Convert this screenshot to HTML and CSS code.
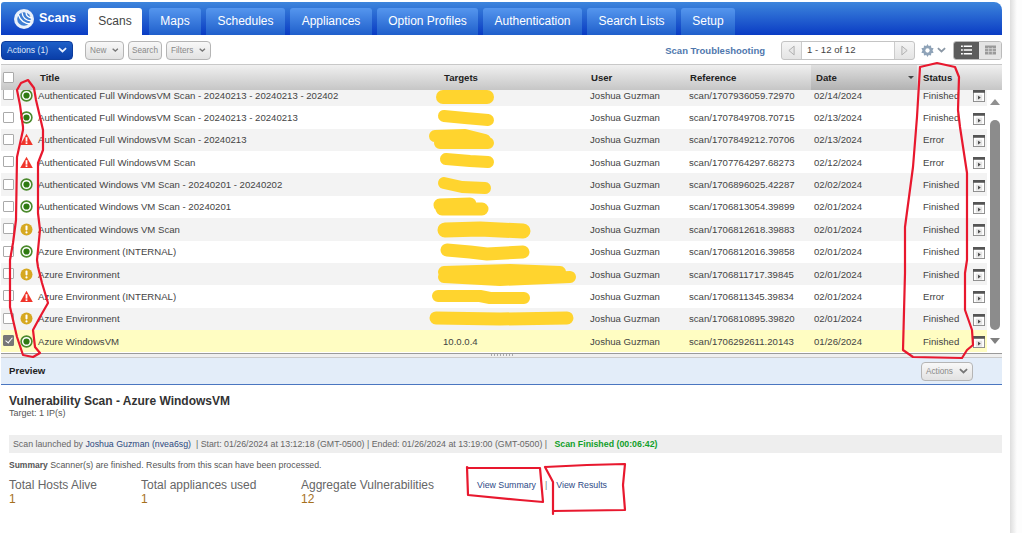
FILE: index.html
```html
<!DOCTYPE html>
<html lang="en">
<head>
    <meta charset="UTF-8">
    <title>Scans</title>
    <link rel="stylesheet" href="styles.css">
</head>
<body>
    <svg class="defs" width="0" height="0">
        <symbol id="ok" viewBox="0 0 13 13">
            <circle cx="6.5" cy="6.5" r="5.4" fill="#fff" stroke="#4b8a2c" stroke-width="1.6"/>
            <circle cx="6.5" cy="6.5" r="3.1" fill="#2f7a12"/>
        </symbol>
        <symbol id="warn" viewBox="0 0 13 13">
            <circle cx="6.5" cy="6.5" r="6" fill="#d6a820"/>
            <rect x="5.5" y="2.6" width="2" height="4.8" rx=".8" fill="#fff"/>
            <circle cx="6.5" cy="9.4" r="1.1" fill="#fff"/>
        </symbol>
        <symbol id="err" viewBox="0 0 13 13">
            <path d="M6.5 .8 12.8 12H.2z" fill="#f0352a"/>
            <rect x="5.6" y="4.2" width="1.8" height="4.4" fill="#fff"/>
            <rect x="5.6" y="9.3" width="1.8" height="1.7" fill="#fff"/>
        </symbol>
        <symbol id="detail" viewBox="0 0 13 13">
            <rect x=".5" y=".5" width="12" height="12" fill="#fff" stroke="#8a8a8a"/>
            <rect x="0" y="0" width="13" height="3" fill="#555"/>
            <rect x="3" y="5" width="7" height="6.5" fill="#e4e4e4"/>
            <path d="M5.5 6.2 8.4 8.2 5.5 10.2z" fill="#444"/>
        </symbol>
        <symbol id="chev" viewBox="0 0 10 6">
            <path d="M1 1 5 4.6 9 1" fill="none" stroke="currentColor" stroke-width="2"/>
        </symbol>
    </svg>

    <div class="app">
        <header class="topbar">
            <div class="brand">
                <svg class="logo" viewBox="0 0 20 20">
                    <circle cx="10" cy="10" r="10" fill="#e9f0fa"/>
                    <circle cx="10" cy="10" r="6.8" fill="#3f7fd4"/>
                    <path d="M4 5C6 11 10 15 17 15M8 3.5C8.5 8 11 11.5 17.5 12M12 3C12 6 13.5 8.5 18 9" fill="none" stroke="#fff" stroke-width="1.3"/>
                </svg>
                <span>Scans</span>
            </div>
            <nav class="tabs">
                <a class="tab active w-scans">Scans</a>
                <a class="tab w-maps">Maps</a>
                <a class="tab w-sched">Schedules</a>
                <a class="tab w-appl">Appliances</a>
                <a class="tab w-opt">Option Profiles</a>
                <a class="tab w-auth">Authentication</a>
                <a class="tab w-search">Search Lists</a>
                <a class="tab w-setup">Setup</a>
            </nav>
        </header>

        <div class="toolbar">
            <button class="btn btn-primary">Actions (1) <svg class="chev"><use href="#chev"/></svg></button>
            <button class="btn btn-new">New <svg class="chev"><use href="#chev"/></svg></button>
            <button class="btn btn-search">Search</button>
            <button class="btn btn-filters">Filters <svg class="chev"><use href="#chev"/></svg></button>
            <a class="trouble">Scan Troubleshooting</a>
            <div class="pager">
                <span class="pager-arrow"><svg viewBox="0 0 8 12"><path d="M7 1 1 6l6 5z" fill="#e6e6e6" stroke="#aaa"/></svg></span>
                <span class="pager-text">1 - 12 of 12</span>
                <span class="pager-arrow"><svg viewBox="0 0 8 12"><path d="M1 1l6 5-6 5z" fill="#e6e6e6" stroke="#aaa"/></svg></span>
            </div>
            <svg class="gear" viewBox="0 0 14 14">
                <path d="M7 0 8.3 2.2 10.8 1.5 11 4 13.6 4.6 12.4 7 13.6 9.4 11 10 10.8 12.5 8.3 11.8 7 14 5.7 11.8 3.2 12.5 3 10 .4 9.4 1.6 7 .4 4.6 3 4 3.2 1.5 5.7 2.2z" fill="#8fa3b8"/>
                <circle cx="7" cy="7" r="2.3" fill="#fff"/>
            </svg>
            <svg class="chev chev-gear"><use href="#chev"/></svg>
            <div class="views">
                <span class="view on">
                    <svg viewBox="0 0 12 10"><path d="M0 1h2M3 1h9M0 5h2M3 5h9M0 9h2M3 9h9" stroke="#fff" stroke-width="1.6"/></svg>
                </span>
                <span class="view">
                    <svg viewBox="0 0 12 10"><path d="M0 0h12v10H0z" fill="#999"/><path d="M0 3.5h12M0 6.5h12M4 2v8M8 2v8" stroke="#ddd" stroke-width=".8"/></svg>
                </span>
            </div>
        </div>

        <div class="grid-head cols">
            <span><i class="box"></i></span>
            <span></span>
            <span>Title</span>
            <span>Targets</span>
            <span>User</span>
            <span>Reference</span>
            <span class="sorted">Date<b></b></span>
            <span>Status</span>
            <span></span>
        </div>

        <div class="grid-body">
            <div class="rows">
                <div class="row cols alt"><span><i class="box"></i></span><svg class="st"><use href="#ok"/></svg><span>Authenticated Full WindowsVM Scan - 20240213 - 20240213 - 202402</span><span></span><span>Joshua Guzman</span><span>scan/1707936059.72970</span><span>02/14/2024</span><span>Finished</span><svg class="dt"><use href="#detail"/></svg></div>
                <div class="row cols"><span><i class="box"></i></span><svg class="st"><use href="#ok"/></svg><span>Authenticated Full WindowsVM Scan - 20240213 - 20240213</span><span></span><span>Joshua Guzman</span><span>scan/1707849708.70715</span><span>02/13/2024</span><span>Finished</span><svg class="dt"><use href="#detail"/></svg></div>
                <div class="row cols alt"><span><i class="box"></i></span><svg class="st"><use href="#err"/></svg><span>Authenticated Full WindowsVM Scan - 20240213</span><span></span><span>Joshua Guzman</span><span>scan/1707849212.70706</span><span>02/13/2024</span><span>Error</span><svg class="dt"><use href="#detail"/></svg></div>
                <div class="row cols"><span><i class="box"></i></span><svg class="st"><use href="#err"/></svg><span>Authenticated Full WindowsVM Scan</span><span></span><span>Joshua Guzman</span><span>scan/1707764297.68273</span><span>02/12/2024</span><span>Error</span><svg class="dt"><use href="#detail"/></svg></div>
                <div class="row cols alt"><span><i class="box"></i></span><svg class="st"><use href="#ok"/></svg><span>Authenticated Windows VM Scan - 20240201 - 20240202</span><span></span><span>Joshua Guzman</span><span>scan/1706896025.42287</span><span>02/02/2024</span><span>Finished</span><svg class="dt"><use href="#detail"/></svg></div>
                <div class="row cols"><span><i class="box"></i></span><svg class="st"><use href="#ok"/></svg><span>Authenticated Windows VM Scan - 20240201</span><span></span><span>Joshua Guzman</span><span>scan/1706813054.39899</span><span>02/01/2024</span><span>Finished</span><svg class="dt"><use href="#detail"/></svg></div>
                <div class="row cols alt"><span><i class="box"></i></span><svg class="st"><use href="#warn"/></svg><span>Authenticated Windows VM Scan</span><span></span><span>Joshua Guzman</span><span>scan/1706812618.39883</span><span>02/01/2024</span><span>Finished</span><svg class="dt"><use href="#detail"/></svg></div>
                <div class="row cols"><span><i class="box"></i></span><svg class="st"><use href="#ok"/></svg><span>Azure Environment (INTERNAL)</span><span></span><span>Joshua Guzman</span><span>scan/1706812016.39858</span><span>02/01/2024</span><span>Finished</span><svg class="dt"><use href="#detail"/></svg></div>
                <div class="row cols alt"><span><i class="box"></i></span><svg class="st"><use href="#warn"/></svg><span>Azure Environment</span><span></span><span>Joshua Guzman</span><span>scan/1706811717.39845</span><span>02/01/2024</span><span>Finished</span><svg class="dt"><use href="#detail"/></svg></div>
                <div class="row cols"><span><i class="box"></i></span><svg class="st"><use href="#err"/></svg><span>Azure Environment (INTERNAL)</span><span></span><span>Joshua Guzman</span><span>scan/1706811345.39834</span><span>02/01/2024</span><span>Error</span><svg class="dt"><use href="#detail"/></svg></div>
                <div class="row cols alt"><span><i class="box"></i></span><svg class="st"><use href="#warn"/></svg><span>Azure Environment</span><span></span><span>Joshua Guzman</span><span>scan/1706810895.39820</span><span>02/01/2024</span><span>Finished</span><svg class="dt"><use href="#detail"/></svg></div>
                <div class="row cols selected"><span><i class="box checked"></i></span><svg class="st"><use href="#ok"/></svg><span>Azure WindowsVM</span><span>10.0.0.4</span><span>Joshua Guzman</span><span>scan/1706292611.20143</span><span>01/26/2024</span><span>Finished</span><svg class="dt"><use href="#detail"/></svg></div>
            </div>
            <div class="scrollbar">
                <i class="arrow-up"></i>
                <i class="thumb"></i>
                <i class="arrow-down"></i>
            </div>
        </div>

        <div class="splitter"><i></i></div>

        <div class="preview-bar">
            <strong>Preview</strong>
            <button class="btn btn-actions">Actions <svg class="chev"><use href="#chev"/></svg></button>
        </div>

        <section class="preview">
            <h1>Vulnerability Scan - Azure WindowsVM</h1>
            <p class="target">Target: 1 IP(s)</p>
            <p class="launch">Scan launched by <a>Joshua Guzman (nvea6sg)</a> &nbsp;| Start: 01/26/2024 at 13:12:18 (GMT-0500) | Ended: 01/26/2024 at 13:19:00 (GMT-0500) | &nbsp; <span class="done">Scan Finished (00:06:42)</span></p>
            <p class="summary"><span>Summary</span> Scanner(s) are finished. Results from this scan have been processed.</p>
            <div class="stats">
                <div class="stat s1"><div>Total Hosts Alive</div><b>1</b></div>
                <div class="stat s2"><div>Total appliances used</div><b>1</b></div>
                <div class="stat s3"><div>Aggregate Vulnerabilities</div><b>12</b></div>
                <div class="links"><a>View Summary</a><span>|</span><a>View Results</a></div>
            </div>
        </section>
    </div>

    <!-- marks drawn on top of the screenshot -->
    <svg class="marks" viewBox="0 0 1022 533">
        <g class="blur">
            <path d="M443 97H487" stroke-width="14"/>
            <path d="M444 116 465 118 488 120" stroke-width="12"/>
            <path d="M435 136 465 135 485 140M440 143 488 143" stroke-width="12"/>
            <path d="M446 159 470 161 488 162" stroke-width="12"/>
            <path d="M444 183 462 187 485 188" stroke-width="12"/>
            <path d="M440 205 470 204M442 209 482 209" stroke-width="13"/>
            <path d="M445 230 480 229 523 231" stroke-width="15"/>
            <path d="M447 250 470 252 487 254 523 252" stroke-width="13"/>
            <path d="M444 272 510 270 560 272M444 277 500 280 570 277" stroke-width="12"/>
            <path d="M438 296 480 296 490 298 524 298" stroke-width="12"/>
            <path d="M436 318 500 319 567 318" stroke-width="13"/>
        </g>
        <g class="pen">
            <path d="M17 90 21 83 28 80 34 88 36 100 40 117 43 130 43 150 38 163 38 213 40 230 37 260 38 267 42 283 48 303 40 317 33 330 35 347 40 353 33 357 23 355 17 337 10 307 10 260 13 243 16 220 17 157 23 130 23 127 20 105z"/>
            <path d="M920 67 937 63 955 67 959 77 958 110 960 127 967 173 967 260 965 273 965 310 972 330 973 345 967 350 962 358 913 357 903 350 905 273 905 227 913 167 917 117z"/>
            <path d="M467 467 468 468 540 468 543 502 520 500 468 495z"/>
            <path d="M545 467 587 465 625 464 623 485 625 510 553 511M553 514 553 482 545 467"/>
        </g>
    </svg>
</body>
</html>
```
FILE: styles.css
```css
html, body {
    margin: 0;
    height: 100%;
    overflow: hidden;
}
html {
    background: #fff;
}
body {
    font-family: "Liberation Sans", Arial, sans-serif;
    font-size: 9.6px;
    color: #444;
    position: relative;
    background: linear-gradient(90deg, #fff 1010px, #dedede 1010px, #fdfdfd 1017px);
}
button {
    font-family: inherit;
}
.defs {
    display: block;
    height: 0;
}
.app {
    width: 1001px;
    margin-left: 1px;
    padding-top: 2px;
    background: #fff;
    height: 531px;
}

/* top bar */
.topbar {
    height: 33px;
    display: flex;
    align-items: flex-end;
    background: linear-gradient(#3d85dc, #0a3cc4);
    border-radius: 3px 8px 0 0;
}
.brand {
    width: 87px;
    height: 100%;
    padding: 7px 0 0 13px;
    box-sizing: border-box;
    display: flex;
    gap: 5px;
    color: #fff;
    font-size: 12.6px;
    font-weight: bold;
}
.brand span {
    margin-top: 2px;
}
.logo {
    width: 20px;
    height: 20px;
}
.tabs {
    display: flex;
    gap: 5px;
}
.tab {
    height: 27px;
    line-height: 27px;
    text-align: center;
    color: #fff;
    font-size: 12px;
    background: linear-gradient(#5596ee, #1f5fcb);
    border-radius: 3px 3px 0 0;
}
.tab.active {
    background: #fff;
    color: #444;
    margin-right: 2px;
}
.w-scans { width: 54px; }
.w-maps { width: 52px; }
.w-sched { width: 79px; }
.w-appl { width: 82px; }
.w-opt { width: 101px; }
.w-auth { width: 99px; }
.w-search { width: 89px; }
.w-setup { width: 54px; }

/* toolbar */
.toolbar {
    height: 29px;
    display: flex;
    align-items: center;
    padding-top: 1px;
    box-sizing: border-box;
}
.btn {
    height: 19px;
    padding: 0 4px;
    font-size: 8.2px;
    color: #888;
    background: linear-gradient(#f8f8f8, #e2e2e2);
    border: 1px solid #b5b5b5;
    border-radius: 4px;
    margin-right: 4px;
    display: flex;
    align-items: center;
    justify-content: center;
    gap: 6px;
}
.btn-primary {
    width: 72px;
    gap: 10px;
    margin-right: 12px;
    font-size: 8.6px;
    color: #dfe9fa;
    background: linear-gradient(#1d5fc8, #0a3ea8);
    border-color: #0c3c9c;
}
.btn-new { width: 39px; }
.btn-search { width: 34px; }
.btn-filters { width: 45px; }
.chev {
    width: 9px;
    height: 6px;
    color: #777;
}
.btn-primary .chev {
    color: #e8f0ff;
}
.trouble {
    margin-left: auto;
    margin-right: 16px;
    font-size: 9.5px;
    font-weight: bold;
    color: #4f77ad;
}
.pager {
    width: 134px;
    height: 19px;
    display: flex;
    box-sizing: border-box;
    border: 1px solid #c4c4c4;
    border-radius: 3px;
    background: linear-gradient(#f5f5f5, #e4e4e4);
}
.pager-arrow {
    width: 19px;
    display: flex;
    align-items: center;
    justify-content: center;
}
.pager-arrow svg {
    width: 7px;
    height: 11px;
}
.pager-text {
    flex: 1;
    background: #fff;
    border-left: 1px solid #ccc;
    border-right: 1px solid #ccc;
    padding-left: 5px;
    line-height: 15px;
}
.gear {
    width: 13px;
    height: 13px;
    margin-left: 6px;
}
.chev-gear {
    margin: 0 7px 0 3px;
    color: #8a97a5;
}
.views {
    width: 49px;
    height: 19px;
    display: flex;
    border: 1px solid #bbb;
    box-sizing: border-box;
    border-radius: 3px;
    overflow: hidden;
}
.view {
    flex: 1;
    display: flex;
    align-items: center;
    justify-content: center;
    background: #e4e4e4;
}
.view.on {
    flex: 0 0 25px;
    background: #5c5c5c;
}
.view svg {
    width: 11px;
    height: 10px;
}

/* scan grid */
.cols {
    display: grid;
    grid-template-columns: 18px 18px 405px 147px 99px 125px 109px 51px 13px;
    align-items: center;
    padding-left: 1px;
}
.grid-head {
    height: 26px;
    font-weight: bold;
    color: #222;
    border-top: 1px solid #c8c8c8;
    box-sizing: border-box;
    background: linear-gradient(#f0f0f0, #c6c6c6);
}
.sorted {
    align-self: stretch;
    display: flex;
    align-items: center;
    justify-content: space-between;
    padding: 0 3px 0 5px;
    margin: 0 6px 0 -3px;
    background: linear-gradient(#e0e0e0, #b2b2b2);
}
.sorted b {
    border: 3px solid transparent;
    border-top-color: #444;
    border-bottom: 0;
}
.grid-head > span:nth-child(3) {
    padding-left: 2px;
}
.grid-head > span:nth-child(4),
.grid-head > span:nth-child(5),
.grid-head > span:nth-child(6) {
    padding-left: 1px;
}
.grid-body {
    height: 263px;
    display: flex;
    overflow: hidden;
}
.rows {
    width: 986px;
    margin-top: -6px;
}
.row {
    height: 22.36px;
    box-sizing: border-box;
    background: #fff;
}
.row.alt {
    background: #f3f3f3;
}
.row.selected {
    background: #fffdc2;
}
.box {
    display: block;
    width: 9px;
    height: 9px;
    background: #fff;
    border: 1px solid #aaa;
    border-radius: 1px;
    margin: 0 0 1px 1px;
    position: relative;
}
.box.checked {
    background: #777;
    border-color: #777;
}
.box.checked::after {
    content: "";
    position: absolute;
    left: 3px;
    top: 0;
    width: 3px;
    height: 6px;
    border: solid #fff;
    border-width: 0 1.5px 1.5px 0;
    transform: rotate(40deg);
}
.st {
    width: 13px;
    height: 13px;
}
.dt {
    width: 12px;
    height: 12px;
    margin-left: -1px;
    margin-top: 2px;
}
.scrollbar {
    flex: 1;
    display: flex;
    flex-direction: column;
    align-items: center;
    padding-top: 9px;
}
.arrow-up {
    border: 5px solid transparent;
    border-top: 0;
    border-bottom: 6px solid #909090;
}
.arrow-down {
    border: 5px solid transparent;
    border-bottom: 0;
    border-top: 6px solid #808080;
    margin-top: 8px;
}
.thumb {
    width: 10px;
    height: 210px;
    margin-top: 15px;
    background: #8c8c8c;
    border-radius: 5px;
}
.splitter {
    height: 5px;
    border-top: 1px solid #9a9a9a;
    border-bottom: 1px solid #c9c9c9;
    background: #efefef;
    box-sizing: border-box;
    display: flex;
    justify-content: center;
}
.splitter i {
    width: 22px;
    height: 2px;
    background: repeating-linear-gradient(90deg, #aaa 0 1px, transparent 1px 3px);
}

/* preview */
.preview-bar {
    height: 27px;
    box-sizing: border-box;
    display: flex;
    align-items: center;
    justify-content: space-between;
    padding: 0 25px 2px 8px;
    background: #e3edf9;
    border-bottom: 1px solid #4a76c0;
    color: #222;
}
.btn-actions {
    width: 52px;
    margin: 2px 4px 0 0;
}
.preview {
    padding: 9px 0 0 8px;
}
.preview h1 {
    margin: 0;
    font-size: 12px;
    line-height: 14px;
    color: #333;
}
.target {
    margin: 0;
    font-size: 9px;
    line-height: 10px;
    color: #555;
}
.launch {
    margin: 17px 0 0;
    height: 18px;
    line-height: 18px;
    padding-left: 4px;
    background: #eee;
    font-size: 8.8px;
    color: #666;
}
.launch a {
    color: #2d4a80;
}
.done {
    color: #11a02a;
    font-weight: bold;
}
.summary {
    margin: 6px 0 0;
    font-size: 8.8px;
    line-height: 12px;
    color: #555;
}
.summary span {
    font-weight: bold;
    font-size: 8.5px;
}
.stats {
    display: flex;
    margin-top: 7px;
}
.stat {
    font-size: 12px;
    line-height: 14px;
    color: #666;
}
.stat b {
    display: block;
    font-weight: normal;
    color: #a5701c;
}
.s1 { width: 132px; }
.s2 { width: 160px; }
.s3 { width: 176px; }
.links {
    display: flex;
    gap: 9px;
    font-size: 8.8px;
    line-height: 14px;
    color: #2e4a86;
}
.links span {
    color: #777;
}

/* annotations */
.marks {
    position: absolute;
    left: 0;
    top: 0;
    width: 1022px;
    height: 533px;
    pointer-events: none;
}
.blur path {
    fill: none;
    stroke: #ffd42e;
    stroke-linecap: round;
    stroke-linejoin: round;
}
.pen path {
    fill: none;
    stroke: #e8182e;
    stroke-width: 2.2;
    stroke-linejoin: round;
    stroke-linecap: round;
}
```
